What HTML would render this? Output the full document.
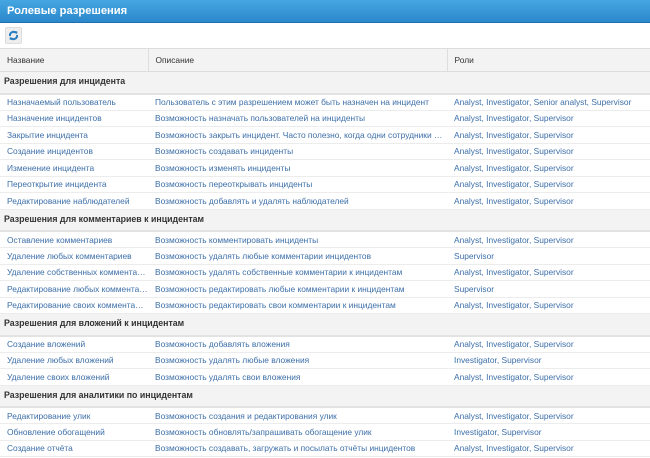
<!DOCTYPE html><html><head><meta charset="utf-8"><style>
*{margin:0;padding:0;box-sizing:border-box}
body{width:650px;height:458px;overflow:hidden;background:#fff;font-family:"Liberation Sans",Tahoma,sans-serif;font-size:8.4px;color:#333}
.title{height:23px;background:linear-gradient(#45a6e2,#2b88cc);border-bottom:1px solid #1f6fae;color:#fff;font-weight:bold;font-size:11.2px;padding:5px 0 0 7px}
.tb{height:25px;position:relative}
.btn{position:absolute;left:5px;top:4px;width:17px;height:17px;background:#eee;border:1px solid #ddd;border-radius:2px}
table{border-collapse:collapse;width:650px;table-layout:fixed}
td,th{white-space:nowrap;overflow:hidden;text-overflow:ellipsis;text-align:left;font-weight:normal}
th{height:23px;background:#f3f3f3;border-top:1px solid #ddd;border-bottom:1px solid #ddd;padding-left:7px;color:#333}
th+th{border-left:1px solid #ddd}
tr.g td{height:22px;background:#f3f3f3;font-weight:bold;font-size:8.8px;color:#333;padding:4px 0 0 4px;vertical-align:top;border-bottom:2px solid #e2e2e2}
tr.r td{height:16.5px;color:#3d6fa8;padding-left:7px;border-bottom:1px solid #ececec}
</style></head><body>
<div class="title">Ролевые разрешения</div>
<div class="tb"><div class="btn"><svg width="15" height="15" viewBox="0 0 15 15"><path d="M4 8A3.5 3.5 0 0 1 10 5" stroke="#2a7fc0" stroke-width="2" fill="none"/><path d="M11 7A3.5 3.5 0 0 1 5 10" stroke="#2a7fc0" stroke-width="2" fill="none"/><path d="M8.5 3L11.5 3.5L11 6.5Z M6.5 12L3.5 11.5L4 8.5Z" fill="#2a7fc0"/></svg></div></div>
<table><colgroup><col style="width:148px"><col style="width:299px"><col style="width:203px"></colgroup>
<tr><th>Название</th><th>Описание</th><th>Роли</th></tr>
<tr class="g"><td colspan="3">Разрешения для инцидента</td></tr>
<tr class="r"><td>Назначаемый пользователь</td><td>Пользователь с этим разрешением может быть назначен на инцидент</td><td>Analyst, Investigator, Senior analyst, Supervisor</td></tr>
<tr class="r"><td>Назначение инцидентов</td><td>Возможность назначать пользователей на инциденты</td><td>Analyst, Investigator, Supervisor</td></tr>
<tr class="r"><td>Закрытие инцидента</td><td>Возможность закрыть инцидент. Часто полезно, когда одни сотрудники делают</td><td>Analyst, Investigator, Supervisor</td></tr>
<tr class="r"><td>Создание инцидентов</td><td>Возможность создавать инциденты</td><td>Analyst, Investigator, Supervisor</td></tr>
<tr class="r"><td>Изменение инцидента</td><td>Возможность изменять инциденты</td><td>Analyst, Investigator, Supervisor</td></tr>
<tr class="r"><td>Переоткрытие инцидента</td><td>Возможность переоткрывать инциденты</td><td>Analyst, Investigator, Supervisor</td></tr>
<tr class="r"><td>Редактирование наблюдателей</td><td>Возможность добавлять и удалять наблюдателей</td><td>Analyst, Investigator, Supervisor</td></tr>
<tr class="g"><td colspan="3">Разрешения для комментариев к инцидентам</td></tr>
<tr class="r"><td>Оставление комментариев</td><td>Возможность комментировать инциденты</td><td>Analyst, Investigator, Supervisor</td></tr>
<tr class="r"><td>Удаление любых комментариев</td><td>Возможность удалять любые комментарии инцидентов</td><td>Supervisor</td></tr>
<tr class="r"><td>Удаление собственных комментариев</td><td>Возможность удалять собственные комментарии к инцидентам</td><td>Analyst, Investigator, Supervisor</td></tr>
<tr class="r"><td>Редактирование любых комментариев</td><td>Возможность редактировать любые комментарии к инцидентам</td><td>Supervisor</td></tr>
<tr class="r"><td>Редактирование своих комментариев</td><td>Возможность редактировать свои комментарии к инцидентам</td><td>Analyst, Investigator, Supervisor</td></tr>
<tr class="g"><td colspan="3">Разрешения для вложений к инцидентам</td></tr>
<tr class="r"><td>Создание вложений</td><td>Возможность добавлять вложения</td><td>Analyst, Investigator, Supervisor</td></tr>
<tr class="r"><td>Удаление любых вложений</td><td>Возможность удалять любые вложения</td><td>Investigator, Supervisor</td></tr>
<tr class="r"><td>Удаление своих вложений</td><td>Возможность удалять свои вложения</td><td>Analyst, Investigator, Supervisor</td></tr>
<tr class="g"><td colspan="3">Разрешения для аналитики по инцидентам</td></tr>
<tr class="r"><td>Редактирование улик</td><td>Возможность создания и редактирования улик</td><td>Analyst, Investigator, Supervisor</td></tr>
<tr class="r"><td>Обновление обогащений</td><td>Возможность обновлять/запрашивать обогащение улик</td><td>Investigator, Supervisor</td></tr>
<tr class="r"><td>Создание отчёта</td><td>Возможность создавать, загружать и посылать отчёты инцидентов</td><td>Analyst, Investigator, Supervisor</td></tr>
</table></body></html>
